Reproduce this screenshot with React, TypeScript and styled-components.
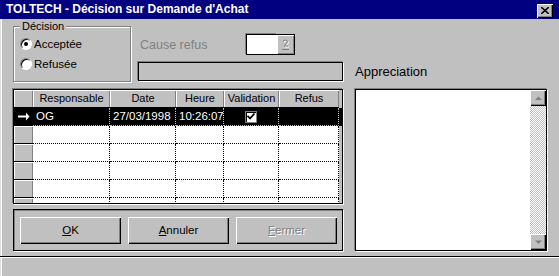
import styled, { createGlobalStyle } from "styled-components";

const Global = createGlobalStyle`
  html, body {
    margin: 0;
    padding: 0;
    background: #c0c0c0;
  }
  body {
    font-family: "Liberation Sans", Arial, sans-serif;
    font-size: 11px;
    color: #000;
  }
`;

const Window = styled.div`
  width: 559px;
  height: 276px;
  background: #c0c0c0;
  display: flex;
  flex-direction: column;
  overflow: hidden;
  box-shadow: inset 1px 0 #dfdfdf, inset 2px 0 #fff;
`;

const TitleBar = styled.div`
  height: 19px;
  background: #000080;
  display: flex;
  align-items: center;
  justify-content: space-between;
  padding: 0 6px 0 6px;
  flex-shrink: 0;
`;

const Title = styled.div`
  color: #fff;
  font-weight: bold;
  font-size: 12px;
  line-height: 19px;
`;

const CloseBtn = styled.div`
  width: 16px;
  height: 14px;
  margin-top: 2px;
  background: #c0c0c0;
  box-shadow: inset 1px 1px #fff, inset -1px -1px #000, inset -2px -2px #808080;
  display: flex;
  align-items: center;
  justify-content: center;
`;

const Body = styled.div`
  display: flex;
  padding-left: 12px;
  height: 237px;
  flex-shrink: 0;
`;

const LeftCol = styled.div`
  width: 331px;
  display: flex;
  flex-direction: column;
`;

const TopArea = styled.div`
  height: 70px;
  display: flex;
`;

const GroupBox = styled.div`
  position: relative;
  margin: 7px 0 0 1px;
  width: 118px;
  height: 56px;
  box-sizing: border-box;
  border: 1px solid #808080;
  box-shadow: inset 1px 1px #fff, 1px 1px #fff;
  display: flex;
  flex-direction: column;
  padding: 10px 0 0 6px;
  gap: 6px;
`;

const Legend = styled.span`
  position: absolute;
  top: -7px;
  left: 6px;
  padding: 0 2px;
  background: #c0c0c0;
  line-height: 13px;
`;

const RadioRow = styled.div`
  display: flex;
  align-items: center;
  gap: 2px;
  height: 14px;
  font-size: 11.5px;
`;

const RadioDot = styled.span<{ $on?: boolean }>`
  width: 12px;
  height: 12px;
  border-radius: 50%;
  background: #fff;
  box-sizing: border-box;
  border: 1px solid;
  border-color: #808080 #fff #fff #808080;
  box-shadow: inset 1px 1px #000;
  display: flex;
  align-items: center;
  justify-content: center;
  &::after {
    content: "";
    width: 4px;
    height: 4px;
    border-radius: 50%;
    background: ${(p) => (p.$on ? "#000" : "transparent")};
  }
`;

const CausePart = styled.div`
  margin-left: 7px;
  width: 205px;
  display: flex;
  flex-direction: column;
`;

const CauseRow = styled.div`
  margin-top: 15px;
  height: 21px;
  display: flex;
  align-items: center;
`;

const CauseLabel = styled.span`
  font-size: 12.5px;
  color: #808080;
  margin-left: 2px;
  width: 106px;
`;

const SmallInput = styled.div`
  width: 31px;
  height: 21px;
  box-sizing: border-box;
  background: #fff;
  border: 1px solid #000;
  border-right: none;
  box-shadow: -1px -1px #808080;
`;

const SpinBtn = styled.div`
  width: 18px;
  height: 21px;
  box-sizing: border-box;
  background: #c0c0c0;
  border: 1px solid #000;
  border-left: none;
  box-shadow: inset 1px 1px #fff, inset -1px -1px #808080;
  display: flex;
  align-items: center;
  justify-content: center;
`;

const LongBox = styled.div`
  margin-top: 7px;
  height: 19px;
  box-sizing: border-box;
  border: 1px solid #000;
  box-shadow: -1px -1px #808080, 1px 1px #fff;
`;

const Grid = styled.div`
  margin-left: 1px;
  width: 330px;
  height: 115px;
  box-sizing: border-box;
  border: 1px solid #000;
  box-shadow: -1px -1px #808080, 1px 1px #fff;
  overflow: hidden;
  background: #c0c0c0;
`;

const Row = styled.div<{ $sel?: boolean }>`
  display: grid;
  grid-template-columns: 19px 77px 66px 48px 55px 60px;
  height: 18px;
  background: ${(p) => (p.$sel ? "#000" : "transparent")};
  color: ${(p) => (p.$sel ? "#fff" : "#000")};
`;

const HeadCell = styled.div`
  background: #c0c0c0;
  box-shadow: inset 1px 1px #fff, inset -1px 0 #808080;
  border-bottom: 1px solid #000;
  text-align: center;
  line-height: 17px;
  white-space: nowrap;
  overflow: hidden;
`;

const RowHead = styled.div<{ $sel?: boolean }>`
  background: ${(p) => (p.$sel ? "#000" : "#c0c0c0")};
  box-shadow: ${(p) => (p.$sel ? "none" : "inset 1px 1px #fff, inset -1px 0 #808080")};
  border-bottom: 1px solid #000;
  display: flex;
  align-items: center;
  justify-content: center;
`;

const Cell = styled.div<{ $sel?: boolean; $center?: boolean }>`
  background: ${(p) => (p.$sel ? "#000" : "#fff")};
  border-right: 1px dotted ${(p) => (p.$sel ? "#c0c0c0" : "#000")};
  border-bottom: 1px dotted ${(p) => (p.$sel ? "#c0c0c0" : "#000")};
  padding: 0 3px;
  line-height: 17px;
  white-space: nowrap;
  overflow: hidden;
  font-size: 11.5px;
  display: flex;
  align-items: center;
  justify-content: ${(p) => (p.$center ? "center" : "flex-start")};
`;

const CheckBox = styled.span`
  width: 12px;
  height: 12px;
  box-sizing: border-box;
  background: #fff;
  border: 1px solid #808080;
  box-shadow: inset 1px 1px #000;
  display: flex;
  align-items: center;
  justify-content: center;
`;

const ButtonPanel = styled.div`
  margin: 5px 0 0 1px;
  width: 330px;
  height: 42px;
  box-sizing: border-box;
  border: 1px solid #000;
  box-shadow: inset 1px 1px #808080, 1px 1px #fff;
  display: flex;
  align-items: center;
  gap: 7px;
  padding-left: 6px;
`;

const Button = styled.div<{ $disabled?: boolean }>`
  width: 101px;
  height: 27px;
  box-sizing: border-box;
  background: #c0c0c0;
  box-shadow: inset 1px 1px #fff, inset -1px -1px #000, inset -2px -2px #808080;
  display: flex;
  align-items: center;
  justify-content: center;
  font-size: 11.5px;
  color: ${(p) => (p.$disabled ? "#808080" : "#000")};
  text-shadow: ${(p) => (p.$disabled ? "1px 1px #fff" : "none")};
  u {
    text-decoration: underline;
  }
`;

const RightCol = styled.div`
  margin-left: 12px;
  width: 192px;
  display: flex;
  flex-direction: column;
`;

const Label = styled.div`
  margin-top: 46px;
  font-size: 13px;
  line-height: 14px;
  height: 14px;
`;

const Memo = styled.div`
  margin-top: 10px;
  height: 162px;
  box-sizing: border-box;
  background: #fff;
  border: 1px solid #000;
  box-shadow: -1px -1px #808080, 1px 1px #fff;
  display: flex;
  justify-content: flex-end;
`;

const ScrollBar = styled.div`
  width: 16px;
  display: flex;
  flex-direction: column;
  justify-content: space-between;
  background: repeating-conic-gradient(#c0c0c0 0 25%, #fff 0 50%) 0 0 / 2px 2px;
`;

const ScrollBtn = styled.div`
  width: 16px;
  height: 16px;
  box-sizing: border-box;
  background: #c0c0c0;
  box-shadow: inset 1px 1px #fff, inset -1px -1px #000, inset -2px -2px #808080;
  display: flex;
  align-items: center;
  justify-content: center;
`;

const Separator = styled.div`
  height: 1px;
  background: #000;
  border-bottom: 1px solid #fff;
`;

const Arrow = ({ up }: { up?: boolean }) => (
  <svg width="7" height="5" viewBox="0 0 7 5">
    <path d={up ? "M3.5 0.5 L7 4 L0 4 Z" : "M0 0.5 L7 0.5 L3.5 4 Z"} fill="#808080" />
  </svg>
);

const cols = ["Responsable", "Date", "Heure", "Validation", "Refus"];

export default function App() {
  return (
    <Window>
      <Global />
      <TitleBar>
        <Title>TOLTECH - Décision sur Demande d'Achat</Title>
        <CloseBtn>
          <svg width="8" height="7" viewBox="0 0 8 7">
            <path d="M0 0 L8 7 M8 0 L0 7" stroke="#000" strokeWidth="1.6" />
          </svg>
        </CloseBtn>
      </TitleBar>
      <Body>
        <LeftCol>
          <TopArea>
            <GroupBox>
              <Legend>Décision</Legend>
              <RadioRow>
                <RadioDot $on />
                <span>Acceptée</span>
              </RadioRow>
              <RadioRow>
                <RadioDot />
                <span>Refusée</span>
              </RadioRow>
            </GroupBox>
            <CausePart>
              <CauseRow>
                <CauseLabel>Cause refus</CauseLabel>
                <SmallInput />
                <SpinBtn>
                  <svg width="9" height="12" viewBox="0 0 9 12">
                    <path d="M2 2 Q4.5 0 6.5 2 Q6.5 4 3 7 L7 7" stroke="#fff" strokeWidth="1" fill="none" transform="translate(1 1)" />
                    <path d="M2 2 Q4.5 0 6.5 2 Q6.5 4 3 7 L7 7" stroke="#808080" strokeWidth="1" fill="none" />
                    <path d="M1 10.5 L8 10.5" stroke="#808080" strokeWidth="1" />
                  </svg>
                </SpinBtn>
              </CauseRow>
              <LongBox />
            </CausePart>
          </TopArea>
          <Grid>
            <Row>
              <HeadCell />
              {cols.map((c) => (
                <HeadCell key={c}>{c}</HeadCell>
              ))}
            </Row>
            <Row $sel>
              <RowHead $sel>
                <svg width="12" height="9" viewBox="0 0 12 9">
                  <path d="M0 3.5 H8 V0.5 L11.5 4.5 L8 8.5 V5.5 H0 Z" fill="#fff" />
                </svg>
              </RowHead>
              <Cell $sel>OG</Cell>
              <Cell $sel>27/03/1998</Cell>
              <Cell $sel>10:26:07</Cell>
              <Cell $sel $center>
                <CheckBox>
                  <svg width="8" height="7" viewBox="0 0 8 7">
                    <path d="M0.5 3 L3 5.5 L7.5 0.5" stroke="#000" strokeWidth="1.8" fill="none" />
                  </svg>
                </CheckBox>
              </Cell>
              <Cell $sel />
            </Row>
            {[0, 1, 2, 3, 4].map((i) => (
              <Row key={i}>
                <RowHead />
                <Cell />
                <Cell />
                <Cell />
                <Cell />
                <Cell />
              </Row>
            ))}
          </Grid>
          <ButtonPanel>
            <Button>
              <span>
                <u>O</u>K
              </span>
            </Button>
            <Button>
              <span>
                <u>A</u>nnuler
              </span>
            </Button>
            <Button $disabled>
              <span>
                <u>F</u>ermer
              </span>
            </Button>
          </ButtonPanel>
        </LeftCol>
        <RightCol>
          <Label>Appreciation</Label>
          <Memo>
            <ScrollBar>
              <ScrollBtn>
                <Arrow up />
              </ScrollBtn>
              <ScrollBtn>
                <Arrow />
              </ScrollBtn>
            </ScrollBar>
          </Memo>
        </RightCol>
      </Body>
      <Separator />
    </Window>
  );
}
